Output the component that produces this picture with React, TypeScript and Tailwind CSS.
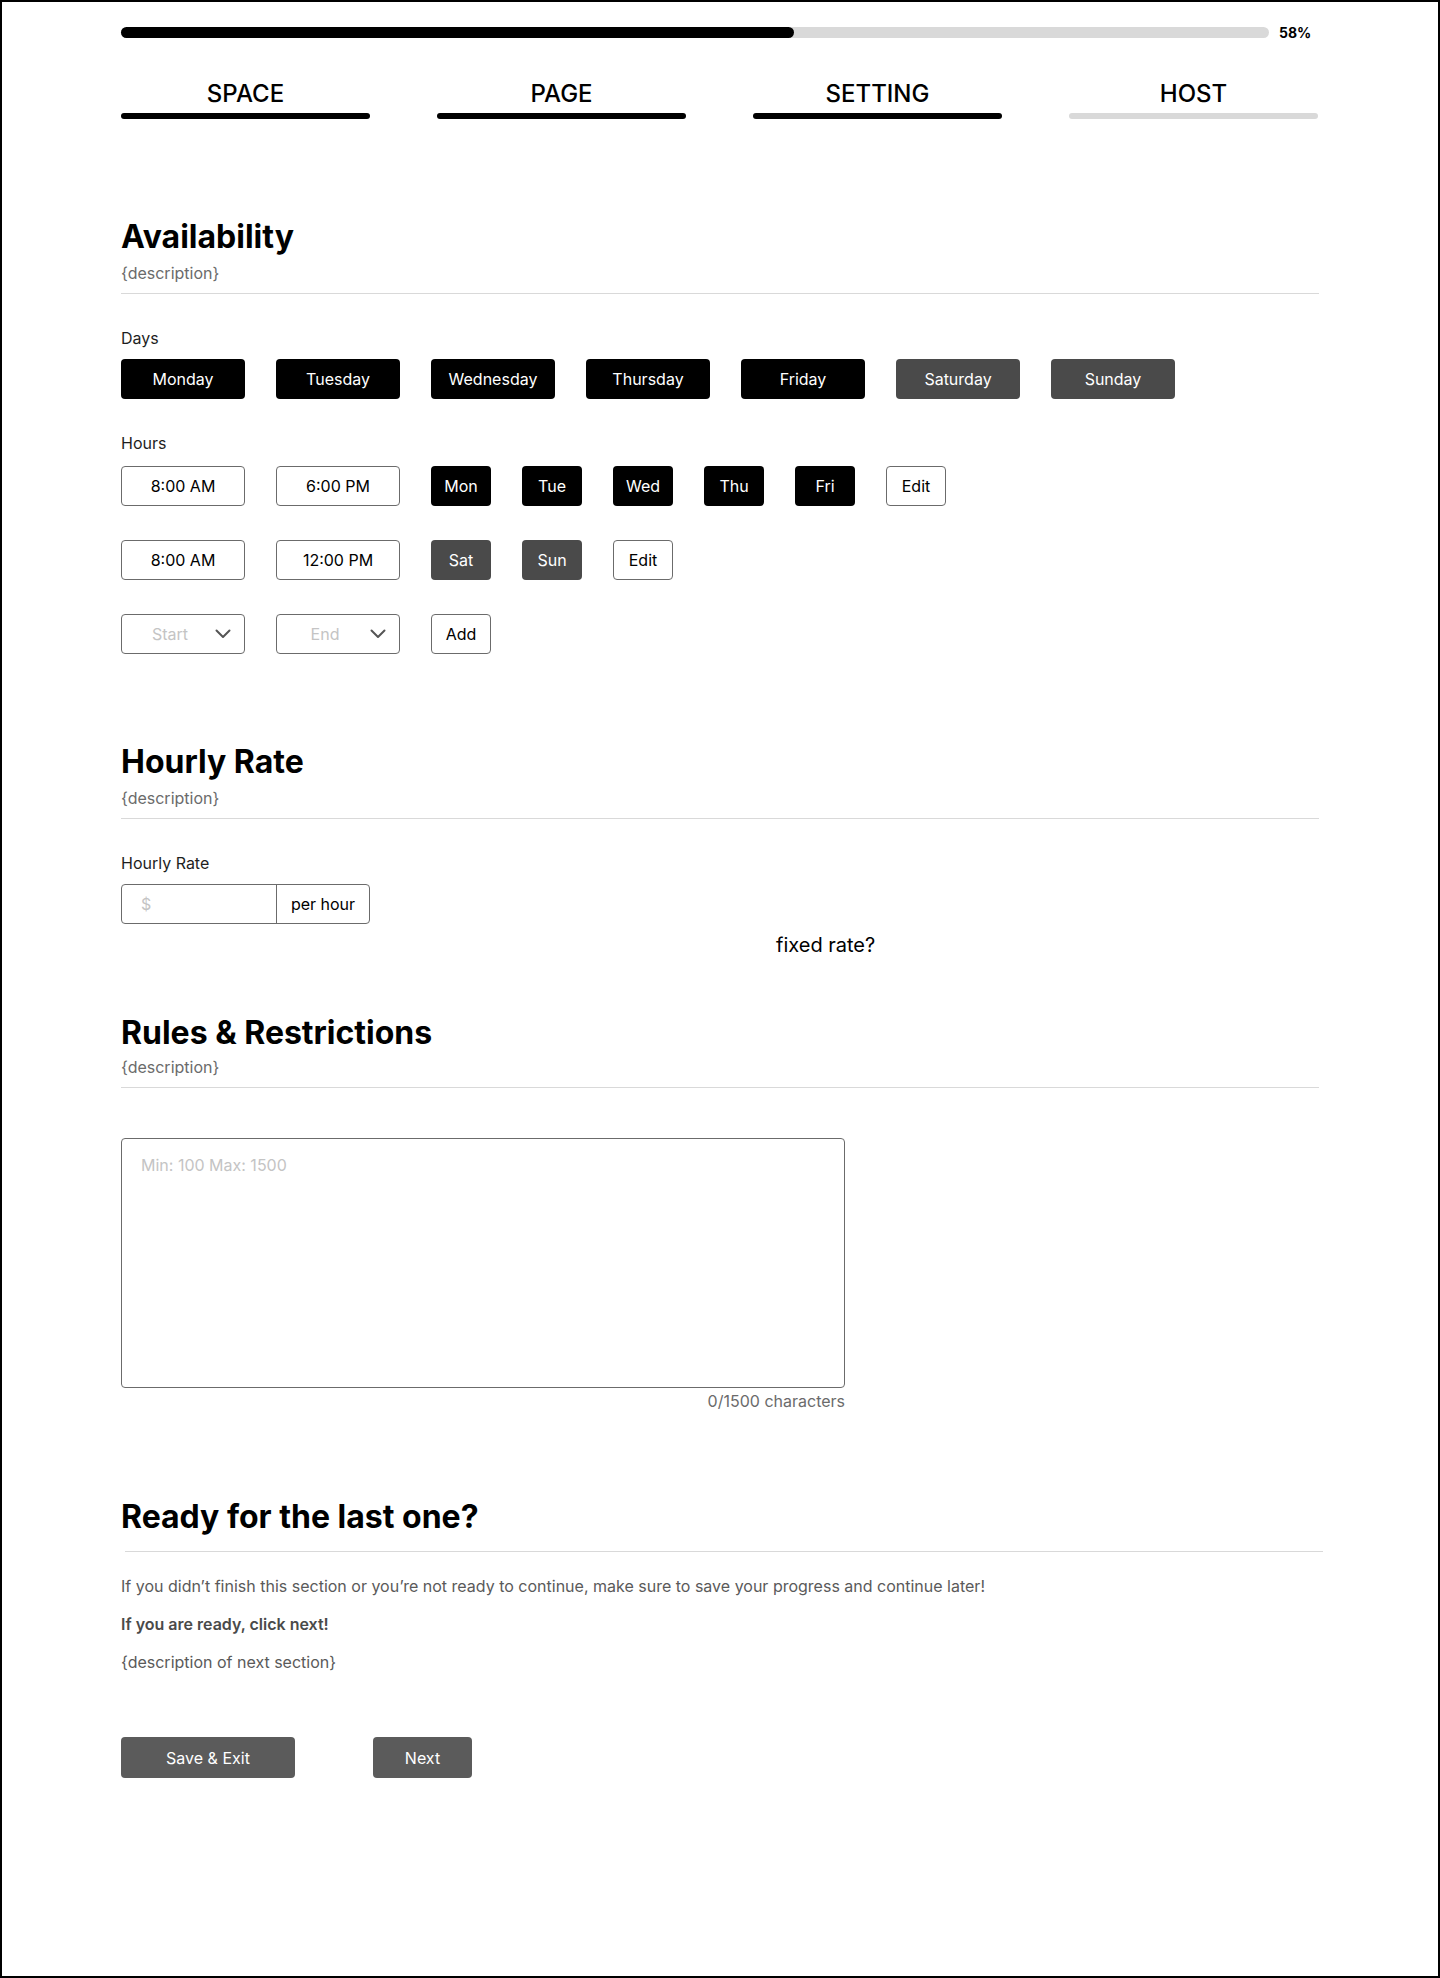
import React from "react";

const days = [
  { name: "Monday", dark: true },
  { name: "Tuesday", dark: true },
  { name: "Wednesday", dark: true },
  { name: "Thursday", dark: true },
  { name: "Friday", dark: true },
  { name: "Saturday", dark: false },
  { name: "Sunday", dark: false },
];

const tabs = [
  { name: "SPACE", done: true },
  { name: "PAGE", done: true },
  { name: "SETTING", done: true },
  { name: "HOST", done: false },
];

function Chevron() {
  return (
    <svg width="16" height="10" viewBox="0 0 16 10" fill="none" className="shrink-0">
      <polyline points="1.5,1.5 8,8 14.5,1.5" stroke="#555555" strokeWidth="2" strokeLinecap="round" strokeLinejoin="round" />
    </svg>
  );
}

function SectionHeader({ title, gap = "mt-[4px]" }: { title: string; gap?: string }) {
  return (
    <div>
      <h2 className="text-[32px] leading-[40px] font-bold text-black">{title}</h2>
      <p className={gap + " text-[16px] leading-[24px] text-[#6b6b6b]"}>{"{description}"}</p>
      <div className="mt-[8px] h-px w-[1198px] bg-[#d9d9d9]" />
    </div>
  );
}

function TimeBox({ text }: { text: string }) {
  return (
    <div className="flex h-[40px] w-[124px] items-center justify-center rounded-[4px] border border-[#6b6b6b] text-[16px] text-black">
      {text}
    </div>
  );
}

function Chip({ text, dark }: { text: string; dark: boolean }) {
  return (
    <div
      className={
        "flex h-[40px] w-[60px] items-center justify-center rounded-[4px] text-[16px] text-white " +
        (dark ? "bg-black" : "bg-[#4a4a4a]")
      }
    >
      {text}
    </div>
  );
}

function OutlineChip({ text }: { text: string }) {
  return (
    <div className="flex h-[40px] w-[60px] items-center justify-center rounded-[4px] border border-[#6b6b6b] text-[16px] text-black">
      {text}
    </div>
  );
}

function SelectBox({ text }: { text: string }) {
  return (
    <div className="flex h-[40px] w-[124px] items-center rounded-[4px] border border-[#6b6b6b]">
      <span className="ml-[5px] w-[86px] text-center text-[16px] text-[#c4c4c4]">{text}</span>
      <span className="ml-[2px] flex items-center">
        <Chevron />
      </span>
    </div>
  );
}

export default function App() {
  return (
    <div className="box-border h-[1978px] w-[1440px] border-2 border-black bg-white font-['Inter',sans-serif] text-black">
      <div className="ml-[119px] w-[1200px] pt-[25px]">
        {/* progress */}
        <div className="flex h-[11px] items-center">
          <div className="h-[11px] w-[1148px] rounded-full bg-[#d9d9d9]">
            <div className="h-[11px] w-[673px] rounded-full bg-black" />
          </div>
          <span className="ml-[10px] text-[14px] leading-[20px] font-bold text-black">58%</span>
        </div>

        {/* tabs */}
        <div className="mt-[40px] flex gap-[67px]">
          {tabs.map((t) => (
            <div key={t.name} className="flex w-[249px] flex-col items-center">
              <span className="text-[24px] leading-[32px] font-medium text-black">{t.name}</span>
              <div className={"mt-[3px] h-[6px] w-[249px] rounded-full " + (t.done ? "bg-black" : "bg-[#d9d9d9]")} />
            </div>
          ))}
        </div>

        {/* Availability */}
        <div className="mt-[98px]">
          <SectionHeader title="Availability" />
          <p className="mt-[32px] text-[16px] leading-[24px] text-[#1e1e1e]">Days</p>
          <div className="mt-[9px] flex gap-[31px]">
            {days.map((d) => (
              <div
                key={d.name}
                className={
                  "flex h-[40px] w-[124px] items-center justify-center rounded-[4px] text-[16px] text-white " +
                  (d.dark ? "bg-black" : "bg-[#4a4a4a]")
                }
              >
                {d.name}
              </div>
            ))}
          </div>

          <p className="mt-[32px] text-[16px] leading-[24px] text-[#1e1e1e]">Hours</p>
          <div className="mt-[11px] flex flex-col gap-[34px]">
            <div className="flex gap-[31px]">
              <TimeBox text="8:00 AM" />
              <TimeBox text="6:00 PM" />
              <Chip text="Mon" dark />
              <Chip text="Tue" dark />
              <Chip text="Wed" dark />
              <Chip text="Thu" dark />
              <Chip text="Fri" dark />
              <OutlineChip text="Edit" />
            </div>
            <div className="flex gap-[31px]">
              <TimeBox text="8:00 AM" />
              <TimeBox text="12:00 PM" />
              <Chip text="Sat" dark={false} />
              <Chip text="Sun" dark={false} />
              <OutlineChip text="Edit" />
            </div>
            <div className="flex gap-[31px]">
              <SelectBox text="Start" />
              <SelectBox text="End" />
              <OutlineChip text="Add" />
            </div>
          </div>
        </div>

        {/* Hourly Rate */}
        <div className="mt-[88px]">
          <SectionHeader title="Hourly Rate" />
          <p className="mt-[32px] text-[16px] leading-[24px] text-[#1e1e1e]">Hourly Rate</p>
          <div className="mt-[9px] flex h-[40px] w-[249px] rounded-[4px] border border-[#6b6b6b]">
            <div className="flex w-[154px] items-center pl-[19px] text-[16px] text-[#c4c4c4]">$</div>
            <div className="flex flex-1 items-center justify-center border-l border-[#6b6b6b] text-[16px] text-black">
              per hour
            </div>
          </div>
          <p className="mt-[7px] ml-[655px] text-[20px] leading-[28px] text-black">fixed rate?</p>
        </div>

        {/* Rules */}
        <div className="mt-[54px]">
          <SectionHeader title="Rules & Restrictions" gap="mt-[2px]" />
          <div className="mt-[50px] w-[724px]">
            <textarea
              placeholder="Min: 100 Max: 1500"
              className="box-border block h-[250px] w-[724px] resize-none rounded-[4px] border border-[#6b6b6b] px-[19px] pt-[14px] text-[16px] leading-[24px] text-black outline-none placeholder:text-[#c4c4c4]"
            />
            <p className="mt-[1px] text-right text-[16px] leading-[24px] text-[#6b6b6b]">0/1500 characters</p>
          </div>
        </div>

        {/* Ready */}
        <div className="mt-[84px]">
          <h2 className="text-[32px] leading-[40px] font-bold text-black">Ready for the last one?</h2>
          <div className="mt-[14px] ml-[4px] h-px w-[1198px] bg-[#d9d9d9]" />
          <p className="mt-[22px] text-[16px] leading-[24px] text-[#5a5a5a]">
            If you didn’t finish this section or you’re not ready to continue, make sure to save your progress and continue later!
          </p>
          <p className="mt-[14px] text-[16px] leading-[24px] font-semibold text-[#4a4a4a]">If you are ready, click next!</p>
          <p className="mt-[14px] text-[16px] leading-[24px] text-[#5a5a5a]">{"{description of next section}"}</p>
          <div className="mt-[63px] flex gap-[78px]">
            <button className="flex h-[41px] w-[174px] items-center justify-center rounded-[4px] bg-[#5b5b5b] text-[16px] text-white">
              Save &amp; Exit
            </button>
            <button className="flex h-[41px] w-[99px] items-center justify-center rounded-[4px] bg-[#5b5b5b] text-[16px] text-white">
              Next
            </button>
          </div>
        </div>
      </div>
    </div>
  );
}
